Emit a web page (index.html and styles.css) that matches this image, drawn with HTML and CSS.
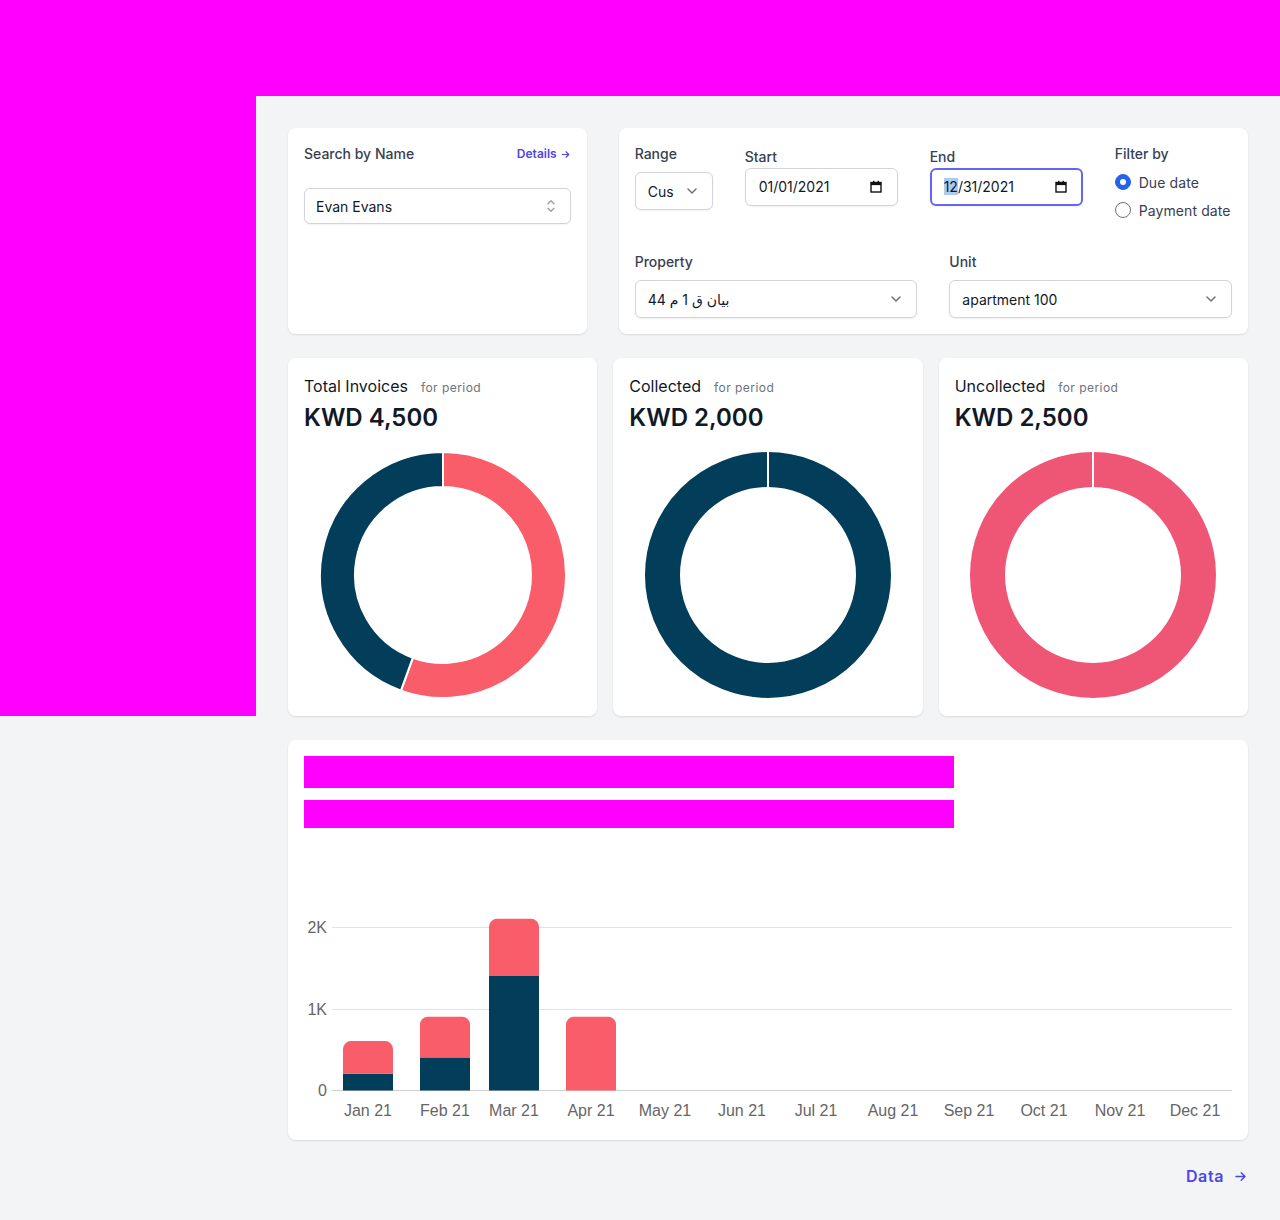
FILE: index.html
```html
<!DOCTYPE html>
<html lang="en">
<head>
<meta charset="utf-8">
<title>Dashboard</title>
<link rel="stylesheet" href="styles.css">
</head>
<body>
<div class="topbar"></div>
<div class="layout">
  <aside class="sidebar"></aside>
  <main class="main">
    <div class="top-grid">
      <section class="card search-card">
        <div class="search-head">
          <span class="label">Search by Name</span>
          <a class="details-link">Details
            <svg class="details-arrow" viewBox="0 0 20 20" fill="none" stroke="currentColor" stroke-width="2" stroke-linecap="round" stroke-linejoin="round"><path d="M4 10h12M11 5l5 5-5 5"/></svg>
          </a>
        </div>
        <div class="control combobox">
          <span class="control-text">Evan Evans</span>
          <svg class="selector-icon" viewBox="0 0 24 24" fill="none" stroke="currentColor" stroke-width="2" stroke-linecap="round" stroke-linejoin="round"><path d="M8 9l4-4 4 4m0 6l-4 4-4-4"/></svg>
        </div>
      </section>

      <section class="card filter-card">
        <div class="filter-row">
          <div class="field range-field">
            <div class="label">Range</div>
            <div class="control select range-select">
              <span class="control-text">Cus</span>
              <svg class="chevron" viewBox="0 0 20 20" fill="none" stroke="currentColor" stroke-width="1.5" stroke-linecap="round" stroke-linejoin="round"><path d="M6 8l4 4 4-4"/></svg>
            </div>
          </div>
          <div class="field date-field">
            <div class="label">Start</div>
            <div class="control date-input">
              <span class="control-text">01/01/2021</span>
              <svg class="cal-icon" viewBox="0 0 12 13"><rect x="1" y="2.5" width="10" height="9.5" fill="none" stroke="#111" stroke-width="1.4"/><rect x="1" y="2.5" width="10" height="2.6" fill="#111"/><rect x="3" y="0.8" width="1.4" height="2" fill="#111"/><rect x="7.6" y="0.8" width="1.4" height="2" fill="#111"/></svg>
            </div>
          </div>
          <div class="field date-field">
            <div class="label">End</div>
            <div class="control date-input focused">
              <span class="control-text"><span class="seg-selected">12</span>/31/2021</span>
              <svg class="cal-icon" viewBox="0 0 12 13"><rect x="1" y="2.5" width="10" height="9.5" fill="none" stroke="#111" stroke-width="1.4"/><rect x="1" y="2.5" width="10" height="2.6" fill="#111"/><rect x="3" y="0.8" width="1.4" height="2" fill="#111"/><rect x="7.6" y="0.8" width="1.4" height="2" fill="#111"/></svg>
            </div>
          </div>
          <div class="field filterby-field">
            <div class="label">Filter by</div>
            <div class="radio-list">
              <div class="radio-row"><span class="radio checked"></span><span class="radio-label">Due date</span></div>
              <div class="radio-row"><span class="radio"></span><span class="radio-label">Payment date</span></div>
            </div>
          </div>
        </div>
        <div class="prop-row">
          <div class="field">
            <div class="label">Property</div>
            <div class="control select">
              <span class="control-text arabic">بيان ق 1 م 44</span>
              <svg class="chevron" viewBox="0 0 20 20" fill="none" stroke="currentColor" stroke-width="1.5" stroke-linecap="round" stroke-linejoin="round"><path d="M6 8l4 4 4-4"/></svg>
            </div>
          </div>
          <div class="field">
            <div class="label">Unit</div>
            <div class="control select">
              <span class="control-text">apartment 100</span>
              <svg class="chevron" viewBox="0 0 20 20" fill="none" stroke="currentColor" stroke-width="1.5" stroke-linecap="round" stroke-linejoin="round"><path d="M6 8l4 4 4-4"/></svg>
            </div>
          </div>
        </div>
      </section>
    </div>

    <div class="kpi-grid">
      <section class="card kpi-card">
        <div class="kpi-head"><span class="kpi-title">Total Invoices</span><span class="kpi-sub">for period</span></div>
        <div class="kpi-value">KWD 4,500</div>
        <svg class="donut" viewBox="0 0 246 246">
          <path d="M123 0 A123 123 0 1 1 80.93 238.58 L92.90 205.69 A88 88 0 1 0 123 35 Z" fill="#f95d6a" stroke="#fff" stroke-width="2" stroke-linejoin="round"/>
          <path d="M80.93 238.58 A123 123 0 0 1 123 0 L123 35 A88 88 0 0 0 92.90 205.69 Z" fill="#023e5a" stroke="#fff" stroke-width="2" stroke-linejoin="round"/>
        </svg>
      </section>
      <section class="card kpi-card">
        <div class="kpi-head"><span class="kpi-title">Collected</span><span class="kpi-sub">for period</span></div>
        <div class="kpi-value">KWD 2,000</div>
        <svg class="donut" viewBox="0 0 246 246">
          <circle cx="123" cy="123" r="105.5" fill="none" stroke="#023e5a" stroke-width="35"/>
          <line x1="123" y1="0" x2="123" y2="35.5" stroke="#fff" stroke-width="2"/>
        </svg>
      </section>
      <section class="card kpi-card">
        <div class="kpi-head"><span class="kpi-title">Uncollected</span><span class="kpi-sub">for period</span></div>
        <div class="kpi-value">KWD 2,500</div>
        <svg class="donut" viewBox="0 0 246 246">
          <circle cx="123" cy="123" r="105.5" fill="none" stroke="#ef5675" stroke-width="35"/>
          <line x1="123" y1="0" x2="123" y2="35.5" stroke="#fff" stroke-width="2"/>
        </svg>
      </section>
    </div>

    <section class="card chart-card">
      <div class="placeholder ph-1"></div>
      <div class="placeholder ph-2"></div>
      <svg class="bar-chart" viewBox="0 0 928 284" width="928" height="284">
        <g class="grid">
          <line x1="28" y1="87.5" x2="928" y2="87.5" stroke="#e3e3e3" stroke-width="1"/>
          <line x1="28" y1="169.5" x2="928" y2="169.5" stroke="#e3e3e3" stroke-width="1"/>
          <line x1="28" y1="250.5" x2="928" y2="250.5" stroke="#cfcfcf" stroke-width="1"/>
        </g>
        <g class="ylabels" font-family="Liberation Sans, Arial, sans-serif" font-size="16" fill="#666" text-anchor="end">
          <text x="23" y="93">2K</text>
          <text x="23" y="175">1K</text>
          <text x="23" y="256">0</text>
        </g>
        <g class="bars">
          <rect x="39" y="233.7" width="50" height="16.8" fill="#023e5a"/>
          <path d="M39 233.7 V209.1 A8 8 0 0 1 47 201.1 H81 A8 8 0 0 1 89 209.1 V233.7 Z" fill="#f95d6a"/>
          <rect x="116" y="217.4" width="50" height="33.1" fill="#023e5a"/>
          <path d="M116 217.4 V184.65 A8 8 0 0 1 124 176.65 H158 A8 8 0 0 1 166 184.65 V217.4 Z" fill="#f95d6a"/>
          <rect x="185" y="135.9" width="50" height="114.6" fill="#023e5a"/>
          <path d="M185 135.9 V86.85 A8 8 0 0 1 193 78.85 H227 A8 8 0 0 1 235 86.85 V135.9 Z" fill="#f95d6a"/>
          <path d="M262 250.5 V184.65 A8 8 0 0 1 270 176.65 H304 A8 8 0 0 1 312 184.65 V250.5 Z" fill="#f95d6a"/>
        </g>
        <g class="xlabels" font-family="Liberation Sans, Arial, sans-serif" font-size="16" fill="#666" text-anchor="middle">
          <text x="64" y="276">Jan 21</text>
          <text x="141" y="276">Feb 21</text>
          <text x="210" y="276">Mar 21</text>
          <text x="287" y="276">Apr 21</text>
          <text x="361" y="276">May 21</text>
          <text x="438" y="276">Jun 21</text>
          <text x="512" y="276">Jul 21</text>
          <text x="589" y="276">Aug 21</text>
          <text x="665" y="276">Sep 21</text>
          <text x="740" y="276">Oct 21</text>
          <text x="816" y="276">Nov 21</text>
          <text x="891" y="276">Dec 21</text>
        </g>
      </svg>
    </section>

    <div class="data-row">
      <a class="data-link">Data
        <svg class="data-arrow" viewBox="0 0 20 20" fill="none" stroke="currentColor" stroke-width="2" stroke-linecap="round" stroke-linejoin="round"><path d="M4 10h12M11 5l5 5-5 5"/></svg>
      </a>
    </div>
  </main>
</div>
</body>
</html>
```

FILE: styles.css
```css
* { box-sizing: border-box; }

html, body {
  margin: 0;
  padding: 0;
}

body {
  background: #f3f4f6;
  font-family: Inter, "Noto Sans", "DejaVu Sans", sans-serif;
  color: #111827;
  width: 1280px;
  min-height: 1220px;
}

.topbar {
  height: 96px;
  background: #ff00ff;
}

.layout {
  display: flex;
  align-items: flex-start;
}

.sidebar {
  width: 256px;
  flex: 0 0 256px;
  height: 620px;
  background: #ff00ff;
}

.main {
  flex: 1;
  padding: 32px 32px 32px 32px;
}

.card {
  background: #fff;
  border-radius: 8px;
  box-shadow: 0 1px 2px rgba(0, 0, 0, 0.06), 0 1px 3px rgba(0, 0, 0, 0.05);
  padding: 16px;
}

.label {
  font-size: 14px;
  line-height: 20px;
  font-weight: 500;
  color: #374151;
}

/* top grid */
.top-grid {
  display: grid;
  grid-template-columns: repeat(3, 1fr);
  gap: 32px;
}

.filter-card {
  grid-column: span 2;
}

.search-head {
  display: flex;
  justify-content: space-between;
  align-items: center;
}

.details-link {
  font-size: 12px;
  line-height: 20px;
  font-weight: 600;
  color: #4f46e5;
  display: flex;
  align-items: center;
  gap: 3px;
}

.details-arrow {
  width: 11px;
  height: 11px;
}

.control {
  display: flex;
  align-items: center;
  justify-content: space-between;
  border: 1px solid #d1d5db;
  border-radius: 6px;
  background: #fff;
  box-shadow: 0 1px 2px rgba(0, 0, 0, 0.05);
  font-size: 14px;
  color: #111827;
}

.combobox {
  margin-top: 24px;
  height: 36px;
  padding: 0 10px 0 11px;
}

.selector-icon {
  width: 18px;
  height: 18px;
  color: #9ca3af;
}

.filter-row {
  display: flex;
  gap: 32px;
}

.range-field { width: 78px; }
.date-field { width: 153px; padding-top: 3px; }
.filterby-field { width: 117px; }

.select {
  height: 38px;
  margin-top: 8px;
  padding: 0 10px 0 12px;
}

.chevron {
  width: 20px;
  height: 20px;
  color: #6b7280;
}

.date-input {
  height: 38px;
  margin-top: 1px;
  padding: 0 15px 1px 13px;
}

.date-input.focused {
  border: 2px solid #6366f1;
  padding: 0 14px 1px 12px;
}

.seg-selected {
  background: #a9cbf5;
}

.cal-icon {
  width: 12px;
  height: 13px;
}

.radio-list {
  margin-top: 4px;
}

.radio-row {
  display: flex;
  align-items: center;
  height: 28px;
}

.radio {
  width: 16px;
  height: 16px;
  border-radius: 50%;
  border: 1px solid #6b7280;
  background: #fff;
  flex: 0 0 16px;
  position: relative;
}

.radio.checked {
  background: #2563eb;
  border-color: #2563eb;
}

.radio.checked::after {
  content: "";
  position: absolute;
  left: 4px;
  top: 4px;
  width: 6px;
  height: 6px;
  border-radius: 50%;
  background: #fff;
}

.radio-label {
  margin-left: 8px;
  font-size: 14px;
  color: #374151;
  white-space: nowrap;
  letter-spacing: 0.1px;
}

.prop-row {
  display: grid;
  grid-template-columns: 1fr 1fr;
  gap: 32px;
  margin-top: 28px;
}

.arabic {
  font-family: Inter, "DejaVu Sans", "Noto Sans", sans-serif;
}

/* KPI */
.kpi-grid {
  display: grid;
  grid-template-columns: repeat(3, 1fr);
  gap: 16px;
  margin-top: 24px;
}

.kpi-card {
  padding: 16px 16px 18px;
  display: flex;
  flex-direction: column;
}

.kpi-head {
  display: flex;
  align-items: baseline;
  line-height: 24px;
  height: 24px;
}

.kpi-title {
  font-size: 16px;
  color: #111827;
}

.kpi-sub {
  font-size: 12px;
  color: #6b7280;
  margin-left: 13px;
  letter-spacing: 0.45px;
}

.kpi-value {
  font-size: 24px;
  line-height: 32px;
  font-weight: 600;
  margin-top: 4px;
  color: #111827;
}

.donut {
  width: 246px;
  height: 246px;
  margin: 18px auto 0;
  display: block;
}

/* chart */
.chart-card {
  margin-top: 24px;
}

.placeholder {
  width: 650px;
  background: #ff00ff;
}

.ph-1 { height: 32px; }
.ph-2 { height: 28px; margin-top: 12px; }

.bar-chart {
  display: block;
  margin-top: 12px;
}

.data-row {
  display: flex;
  justify-content: flex-end;
  margin-top: 24px;
}

.data-link {
  font-size: 16px;
  line-height: 24px;
  font-weight: 600;
  color: #4f46e5;
  display: flex;
  align-items: center;
  gap: 9px;
  letter-spacing: 0.6px;
}

.data-arrow {
  width: 15px;
  height: 15px;
}
```
